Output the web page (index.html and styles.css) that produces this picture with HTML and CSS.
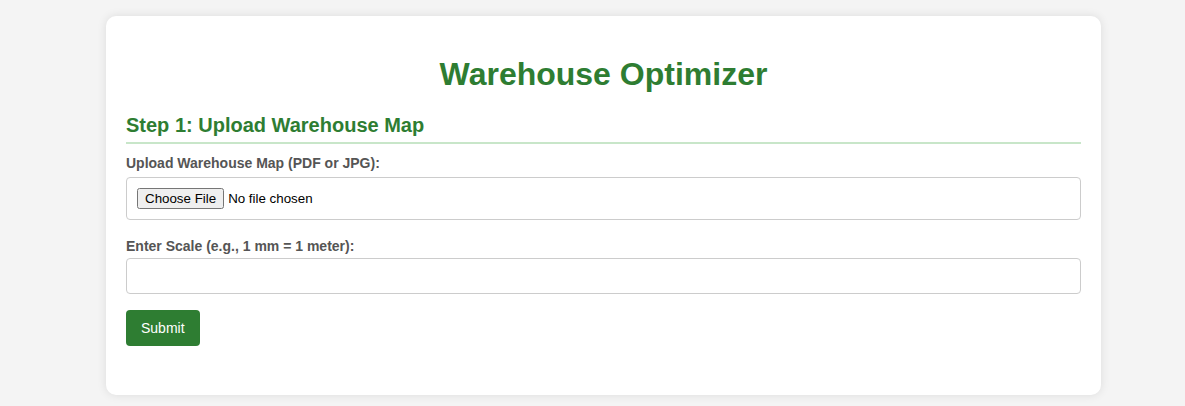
FILE: index.html
```html
<!DOCTYPE html>
<html lang="en">
<head>
<meta charset="utf-8">
<title>Warehouse Optimizer</title>
<link rel="stylesheet" href="styles.css">
</head>
<body>
<div class="container">
  <h1 class="title">Warehouse Optimizer</h1>
  <h2 class="step">Step 1: Upload Warehouse Map</h2>
  <form class="form">
    <div class="group">
      <label class="label" for="map">Upload Warehouse Map (PDF or JPG):</label>
      <input class="field file" type="file" id="map" accept=".pdf,.jpg">
    </div>
    <div class="group">
      <label class="label" for="scale">Enter Scale (e.g., 1 mm = 1 meter):</label>
      <input class="field text" type="text" id="scale">
    </div>
    <button class="submit" type="submit">Submit</button>
  </form>
</div>
</body>
</html>
```
FILE: styles.css
```css
html, body {
  margin: 0;
  padding: 0;
}
body {
  background: #f4f4f4;
  font-family: "Liberation Sans", Arial, sans-serif;
  padding: 16px 84px 11px 106px;
}
.container {
  background: #fff;
  border-radius: 10px;
  box-shadow: 0 0 10px rgba(0, 0, 0, 0.1);
  padding: 20px 20px 49px;
}
.title {
  color: #2e7d32;
  text-align: center;
  font-size: 32px;
  margin: 20px 0 21px;
}
.step {
  color: #2e7d32;
  font-size: 20px;
  margin: 0 0 11px;
  padding-bottom: 5px;
  border-bottom: 2px solid #c8e6c9;
}
.group {
  margin-bottom: 16px;
}
.group:first-child {
  margin-bottom: 18px;
}
.label {
  display: block;
  font-weight: bold;
  font-size: 14px;
  color: #555;
  margin-bottom: 6px;
}
.group + .group .label {
  margin-bottom: 4px;
}
.field {
  display: block;
  width: 100%;
  box-sizing: border-box;
  border: 1px solid #ccc;
  border-radius: 4px;
  padding: 10px;
  font-family: "Liberation Sans", Arial, sans-serif;
  background: #fff;
}
.file {
  font-size: 13.333px;
}
.text {
  font-size: 14px;
  padding: 9px 10px;
  height: 36px;
}
.submit {
  display: block;
  background: #2e7d32;
  color: #fff;
  border: none;
  border-radius: 4px;
  padding: 10px 15px;
  font-size: 14px;
  font-family: "Liberation Sans", Arial, sans-serif;
  height: 36px;
  cursor: pointer;
}
```
